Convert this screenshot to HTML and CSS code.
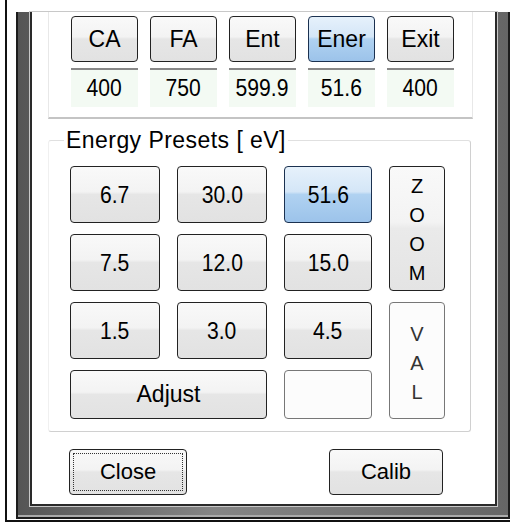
FILE: index.html
```html
<!DOCTYPE html>
<html lang="en">

<head>
  <meta charset="UTF-8">
  <title>Energy Presets</title>
  <link rel="stylesheet" href="styles.css">
</head>

<body>
  <div class="outer">
    <div class="frame">
      <div class="inner">

        <!-- top: mode buttons with values -->
        <div class="modes">
          <div class="mode">
            <button class="btn">CA</button>
            <div class="val"><span>400</span></div>
          </div>
          <div class="mode">
            <button class="btn">FA</button>
            <div class="val"><span>750</span></div>
          </div>
          <div class="mode">
            <button class="btn">Ent</button>
            <div class="val"><span>599.9</span></div>
          </div>
          <div class="mode">
            <button class="btn active">Ener</button>
            <div class="val"><span>51.6</span></div>
          </div>
          <div class="mode">
            <button class="btn">Exit</button>
            <div class="val"><span>400</span></div>
          </div>
        </div>

        <!-- presets -->
        <fieldset class="presets">
          <legend>Energy Presets [ eV]</legend>
          <div class="grid">
            <button class="btn num"><span>6.7</span></button>
            <button class="btn num"><span>30.0</span></button>
            <button class="btn num active"><span>51.6</span></button>
            <button class="btn side zoom">Z<br>O<br>O<br>M</button>
            <button class="btn num"><span>7.5</span></button>
            <button class="btn num"><span>12.0</span></button>
            <button class="btn num"><span>15.0</span></button>
            <button class="btn num"><span>1.5</span></button>
            <button class="btn num"><span>3.0</span></button>
            <button class="btn num"><span>4.5</span></button>
            <button class="btn side val-btn">V<br>A<br>L</button>
            <button class="btn adjust">Adjust</button>
            <button class="btn blank"></button>
          </div>
        </fieldset>

        <div class="footer">
          <button class="btn close">Close</button>
          <button class="btn calib">Calib</button>
        </div>

      </div>
    </div>
  </div>
</body>

</html>
```

FILE: styles.css
```css
* {
  margin: 0;
  padding: 0;
  box-sizing: border-box;
}

body {
  width: 510px;
  height: 524px;
  overflow: hidden;
  background: #fff;
  font-family: "Liberation Sans", Arial, sans-serif;
  color: #000;
}

.outer {
  margin-left: 5px;
  width: 505px;
  height: 522px;
  overflow: hidden;
  border-left: 2px solid #111;
  border-bottom: 2px solid #111;
  padding: 12px 0 0 9px;
}

.frame {
  width: 494px;
  height: 507px;
  border: 2px solid #1c1c1c;
  border-top: none;
  background: linear-gradient(90deg, #555, #858585 40%, #666);
  padding: 0 11px 11px 12px;
  box-shadow: inset 0 -2px 0 #aaa;
}

.inner {
  height: 100%;
  background: #fff;
  border: 2px solid #2a2a2a;
  border-top: none;
  box-shadow: 0 0 0 1px #c8c8c8;
  padding-left: 16px;
}

/* buttons */
.btn {
  font-family: "Liberation Sans", Arial, sans-serif;
  font-size: 23px;
  color: #000;
  border: 1.5px solid #222;
  border-radius: 4px;
  background: linear-gradient(#f9f9f9, #f3f3f3 45%, #e6e6e6 50%, #e2e2e2);
  cursor: default;
}

.btn.active {
  border-color: #1b3150;
  background: linear-gradient(#e6f1fb, #d4e6f7 45%, #b0d2f1 50%, #9cc3ea);
}

/* top panel */
.modes {
  width: 425px;
  height: 107px;
  border: 1px solid #e8e8e8;
  border-top: none;
  border-bottom: 2px solid #c4c4c4;
  display: flex;
  gap: 12px;
  padding: 4px 0 0 22px;
}

.mode {
  width: 67px;
  display: flex;
  flex-direction: column;
}

.mode .btn {
  height: 46px;
}

.val {
  margin-top: 6px;
  height: 39px;
  border-top: 2px solid #888;
  background: #f3faf3;
  text-align: center;
  font-size: 24px;
  line-height: 36px;
}

.val span,
.num span {
  display: inline-block;
  transform: scaleX(0.88);
}

/* presets group */
.presets {
  width: 423px;
  margin-top: 10px;
  border: 1px solid #d0d0d0;
  border-left-color: #f0f0f0;
  border-top-color: #e0e0e0;
  border-radius: 3px;
  padding: 15px 25px 12px 21px;
}

.presets legend {
  font-size: 23px;
  letter-spacing: 0.45px;
  line-height: 22px;
  margin-left: -6px;
  padding: 0 2px;
}

.grid {
  display: grid;
  grid-template-columns: 90px 90px 88px 56px;
  grid-template-rows: 57px 57px 57px 49px;
  column-gap: 17px;
  row-gap: 11px;
}

.num {
  font-size: 24px;
}

.side {
  font-size: 20px;
  line-height: 29px;
  padding-top: 2px;
}

.zoom {
  grid-column: 4;
  grid-row: 1 / 3;
  background: linear-gradient(#f9f9f9, #f3f3f3 45%, #eaeaea 50%, #e4e4e4);
}

.val-btn {
  grid-column: 4;
  grid-row: 3 / 5;
  border-color: #777;
  color: #333;
  background: #fcfcfc;
  padding-top: 6px;
}

.adjust {
  grid-column: 1 / 3;
}

.blank {
  border-color: #777;
  background: #fcfcfc;
}

/* footer */
.footer {
  display: flex;
  justify-content: space-between;
  width: 374px;
  margin: 17px 0 0 21px;
}

.footer .btn {
  height: 46px;
  font-size: 22px;
}

.close {
  width: 118px;
  outline: 1.5px dotted #333;
  outline-offset: -5px;
}

.calib {
  width: 114px;
}
```
